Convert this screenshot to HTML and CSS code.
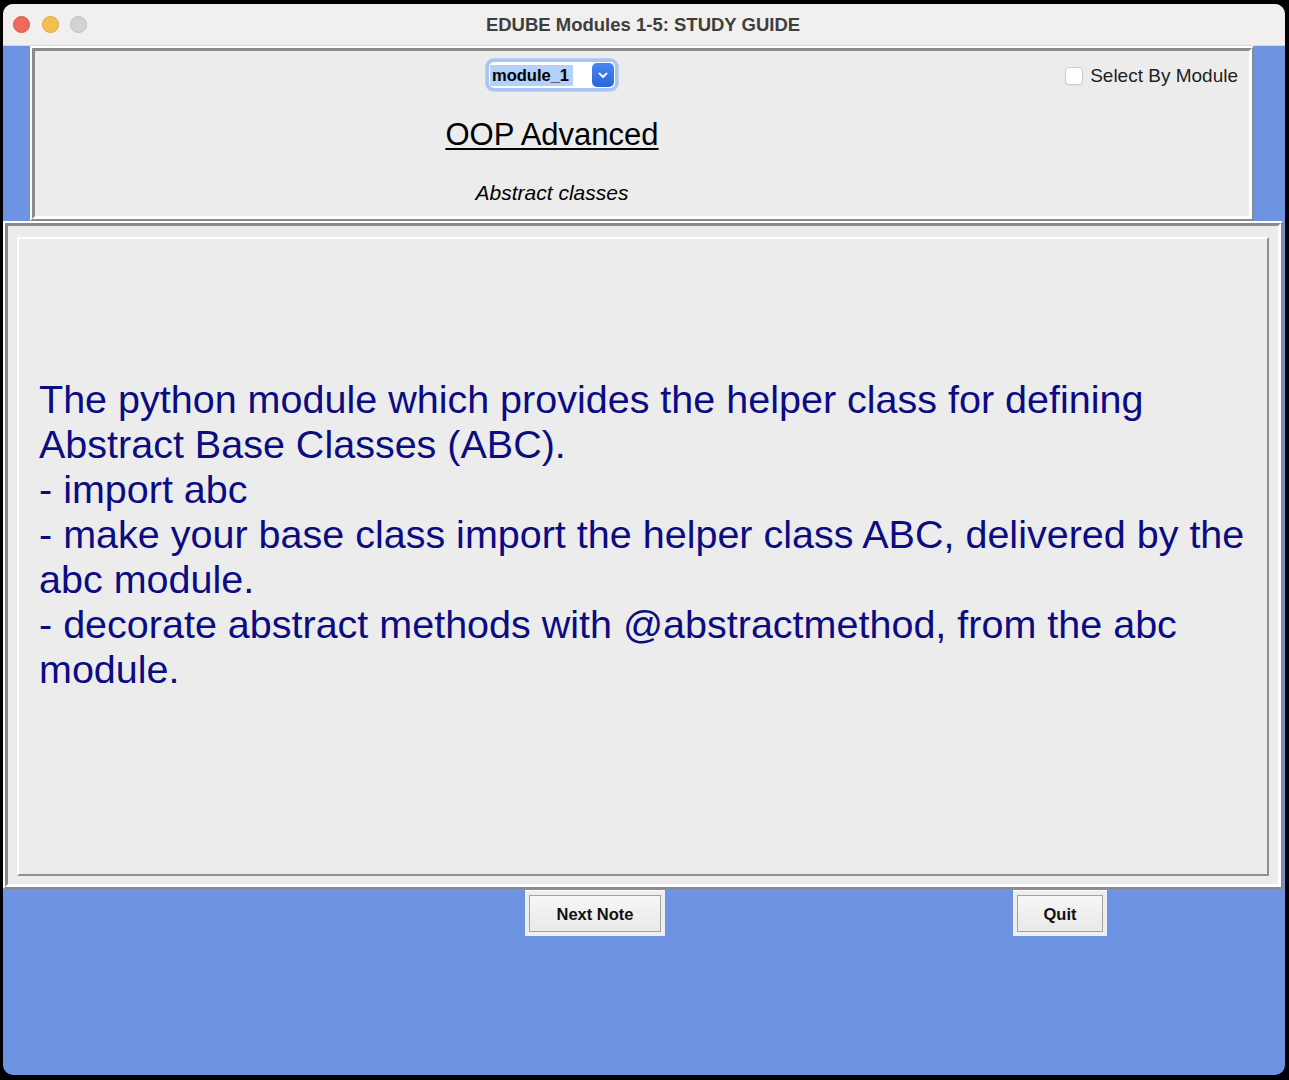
FILE: index.html
```html
<!DOCTYPE html>
<html lang="en">
<head>
<meta charset="utf-8">
<title>EDUBE Modules 1-5: STUDY GUIDE</title>
<link rel="stylesheet" href="styles.css">
</head>
<body>
<div class="window">
  <div class="titlebar">
    <div class="lights">
      <span class="light red"></span>
      <span class="light yellow"></span>
      <span class="light gray"></span>
    </div>
    <div class="title">EDUBE Modules 1-5: STUDY GUIDE</div>
    <div></div>
  </div>

  <div class="top-ridge">
    <div class="top-panel">
      <div class="center-col">
        <div class="combo">
          <span class="combo-text"><span class="sel">module_1</span></span>
          <span class="combo-btn">
            <svg width="10" height="7" viewBox="0 0 10 7"><path d="M1.5 1.5 L5 5 L8.5 1.5" fill="none" stroke="#fff" stroke-width="1.8" stroke-linecap="round" stroke-linejoin="round"/></svg>
          </span>
        </div>
        <div class="heading">OOP Advanced</div>
        <div class="subheading">Abstract classes</div>
      </div>
      <label class="check"><span class="box"></span><span class="check-text">Select By Module</span></label>
    </div>
  </div>

  <div class="main-ridge">
    <div class="main-panel">
      <div class="note">
        <p class="note-text">The python module which provides the helper class for defining<br>Abstract Base Classes (ABC).<br>- import abc<br>- make your base class import the helper class ABC, delivered by the<br>abc module.<br>- decorate abstract methods with @abstractmethod, from the abc<br>module.</p>
      </div>
    </div>
  </div>

  <div class="buttons">
    <div class="btn-frame next-frame"><button class="btn">Next Note</button></div>
    <div class="btn-frame quit-frame"><button class="btn">Quit</button></div>
  </div>
</div>
</body>
</html>
```

FILE: styles.css
```css
html, body {
  margin: 0;
  padding: 0;
  background: #000;
}

body {
  width: 1289px;
  height: 1080px;
  overflow: hidden;
  font-family: "Liberation Sans", Arial, sans-serif;
}

.window {
  margin: 4px 4px 0 3px;
  width: 1282px;
  height: 1071px;
  border-radius: 10px;
  overflow: hidden;
  background: #6f93e3;
}

/* title bar */
.titlebar {
  height: 41px;
  border-bottom: 1px solid #d9d8d7;
  background: #f1f0ef;
  display: grid;
  grid-template-columns: 1fr auto 1fr;
  align-items: center;
}

.lights {
  display: flex;
  gap: 11.5px;
  padding-left: 10px;
}

.light {
  width: 17px;
  height: 17px;
  border-radius: 50%;
  box-sizing: border-box;
}

.light.red { background: #ec6a5e; border: 1px solid #d65a4f; }
.light.yellow { background: #f4bf4f; border: 1px solid #dca83e; }
.light.gray { background: #d4d3d2; border: 1px solid #c2c1c0; }

.title {
  font-size: 18.5px;
  font-weight: bold;
  color: #3e3e3e;
  margin-left: -2px;
}

/* top panel */
.top-ridge {
  margin-left: 27px;
  width: 1224px;
  height: 175px;
  box-sizing: border-box;
  border: 2px solid;
  border-color: #ffffff #8a8a8a #8a8a8a #ffffff;
}

.top-panel {
  height: 100%;
  box-sizing: border-box;
  border: 3px solid;
  border-color: #8a8a8a #ffffff #ffffff #8a8a8a;
  background: #ececec;
  display: flex;
  align-items: flex-start;
}

.center-col {
  width: 600px;
  margin-left: 217px;
  display: flex;
  flex-direction: column;
  align-items: center;
}

.combo {
  margin-top: 11px;
  width: 126px;
  height: 26px;
  background: #fff;
  border-radius: 5px;
  box-shadow: 0 0 0 3px #a7c4f2, 0 0 0 4px #bcd2f5;
  display: flex;
  align-items: center;
  justify-content: space-between;
}

.combo-text {
  padding-left: 1px;
}

.sel {
  display: inline-block;
  background: #b3d1fa;
  padding: 0 4px 0 2px;
  height: 21px;
  line-height: 21px;
  font-size: 16.5px;
  font-weight: bold;
  color: #000;
}

.combo-btn {
  width: 22px;
  height: 24px;
  margin-right: 1px;
  border-radius: 5px;
  background: linear-gradient(#4a86ee, #2a66dc);
  display: flex;
  align-items: center;
  justify-content: center;
}

.heading {
  margin-top: 29px;
  font-size: 31px;
  line-height: 36px;
  color: #000;
  text-decoration: underline;
  text-decoration-thickness: 2px;
  text-underline-offset: 3px;
}

.subheading {
  margin-top: 28px;
  font-size: 21px;
  line-height: 24px;
  font-style: italic;
  color: #000;
}

.check {
  margin-left: auto;
  margin-right: 11px;
  margin-top: 14px;
  display: flex;
  align-items: center;
  gap: 7px;
  height: 22px;
}

.box {
  width: 18px;
  height: 18px;
  box-sizing: border-box;
  border: 1px solid #cdcdcd;
  border-radius: 4px;
  background: #fff;
  box-shadow: 0 1px 1px rgba(0,0,0,0.05);
}

.check-text {
  font-size: 19px;
  color: #1e1e1e;
}

/* main panel */
.main-ridge {
  width: 1280px;
  height: 668px;
  box-sizing: border-box;
  border: 2px solid;
  border-color: #ffffff #8a8a8a #8a8a8a #ffffff;
}

.main-panel {
  height: 100%;
  box-sizing: border-box;
  border: 3px solid;
  border-color: #8a8a8a #ffffff #ffffff #8a8a8a;
  background: #ececec;
  padding: 11px 9px 8px 9px;
}

.note {
  height: 100%;
  box-sizing: border-box;
  border: 2px solid;
  border-color: #ffffff #8f8f8f #8f8f8f #ffffff;
  display: flex;
  flex-direction: column;
  justify-content: center;
  padding: 0 0 44px 20px;
}

.note-text {
  margin: 0;
  font-size: 39.5px;
  line-height: 45px;
  color: #0c0c82;
  white-space: nowrap;
}

/* buttons */
.buttons {
  display: flex;
  margin-top: 1px;
  padding-left: 522px;
}

.btn-frame {
  box-sizing: border-box;
  height: 46px;
  padding: 4px;
  background: #eeeeee;
  border-top: 1px solid #f8f8f8;
}

.next-frame { width: 140px; }
.quit-frame { width: 94px; margin-left: 348px; }

.btn {
  width: 100%;
  height: 100%;
  box-sizing: border-box;
  border: 1px solid #a2a2a2;
  background: linear-gradient(#f6f6f6, #e9e9e9);
  font-family: "Liberation Sans", Arial, sans-serif;
  font-size: 16.5px;
  font-weight: bold;
  color: #111;
  padding: 1px 0 0 0;
  margin: 0;
  border-radius: 0;
}
```
